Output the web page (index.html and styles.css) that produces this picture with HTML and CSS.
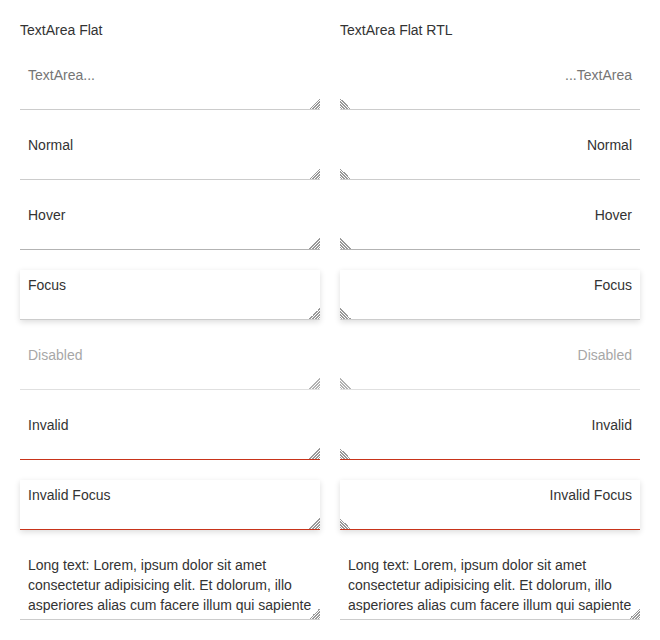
FILE: index.html
```html
<!DOCTYPE html>
<html>
<head>
<meta charset="utf-8">
<link rel="stylesheet" href="styles.css">
</head>
<body>
<div class="grid">
  <div class="col">
    <div class="title">TextArea Flat</div>
    <textarea class="ta" rows="2" placeholder="TextArea..."></textarea>
    <textarea class="ta" rows="2">Normal</textarea>
    <textarea class="ta hover" rows="2">Hover</textarea>
    <textarea class="ta focus" rows="2">Focus</textarea>
    <textarea class="ta" rows="2" disabled>Disabled</textarea>
    <textarea class="ta invalid" rows="2">Invalid</textarea>
    <textarea class="ta invalid focus" rows="2">Invalid Focus</textarea>
    <textarea class="ta" rows="3">Long text: Lorem, ipsum dolor sit amet consectetur adipisicing elit. Et dolorum, illo asperiores alias cum facere illum qui sapiente</textarea>
  </div>
  <div class="col">
    <div class="title">TextArea Flat RTL</div>
    <textarea class="ta" dir="rtl" rows="2" placeholder="TextArea..."></textarea>
    <textarea class="ta" dir="rtl" rows="2">Normal</textarea>
    <textarea class="ta hover" dir="rtl" rows="2">Hover</textarea>
    <textarea class="ta focus" dir="rtl" rows="2">Focus</textarea>
    <textarea class="ta" dir="rtl" rows="2" disabled>Disabled</textarea>
    <textarea class="ta invalid" dir="rtl" rows="2">Invalid</textarea>
    <textarea class="ta invalid focus" dir="rtl" rows="2">Invalid Focus</textarea>
    <textarea class="ta" rows="3">Long text: Lorem, ipsum dolor sit amet consectetur adipisicing elit. Et dolorum, illo asperiores alias cum facere illum qui sapiente</textarea>
  </div>
</div>
</body>
</html>
```

FILE: styles.css
```css
html, body {
  margin: 0;
  padding: 0;
  background: #fff;
}
body {
  padding: 20px;
  font-family: "Liberation Sans", Arial, sans-serif;
  font-size: 14px;
  color: #333;
}
.grid {
  display: grid;
  grid-template-columns: 300px 300px;
  column-gap: 20px;
}
.col {
  display: flex;
  flex-direction: column;
  gap: 20px;
}
.title {
  line-height: 20px;
  height: 20px;
}
.ta {
  display: block;
  box-sizing: border-box;
  width: 300px;
  margin: 0;
  padding: 5px 8px 4px;
  border: none;
  border-bottom: 1px solid #cccccc;
  border-radius: 0;
  background: #fff;
  font-family: "Liberation Sans", Arial, sans-serif;
  font-size: 14px;
  line-height: 20px;
  color: #333;
  outline: none;
  overflow: hidden;
  resize: vertical;
}
.ta::-webkit-resizer {
  background-color: transparent;
  background-repeat: no-repeat;
  background-size: 11px 11px;
  background-position: right bottom;
  background-image:
    linear-gradient(135deg, transparent 50%, #999 50%, #999 56%, transparent 56%),
    linear-gradient(135deg, transparent 63%, #999 63%, #999 69%, transparent 69%),
    linear-gradient(135deg, transparent 76%, #999 76%, #999 82%, transparent 82%),
    linear-gradient(135deg, transparent 89%, #999 89%, #999 95%, transparent 95%);
}
.ta[dir="rtl"]::-webkit-resizer {
  background-position: left bottom;
  background-image:
    linear-gradient(225deg, transparent 50%, #999 50%, #999 56%, transparent 56%),
    linear-gradient(225deg, transparent 63%, #999 63%, #999 69%, transparent 69%),
    linear-gradient(225deg, transparent 76%, #999 76%, #999 82%, transparent 82%),
    linear-gradient(225deg, transparent 89%, #999 89%, #999 95%, transparent 95%);
}
.ta[rows="2"] { height: 50px; }
.ta[rows="3"] { height: 70px; }
.ta::placeholder {
  color: #757575;
}
.ta.hover {
  border-bottom-color: #b3b3b3;
}
.ta.focus {
  box-shadow: 0 2px 6px rgba(0, 0, 0, 0.14);
}
.ta:disabled {
  color: #8a8a8a;
  opacity: 0.75;
  border-bottom-color: #d6d6d6;
}
.ta.invalid {
  border-bottom-color: #c8341a;
}
```
